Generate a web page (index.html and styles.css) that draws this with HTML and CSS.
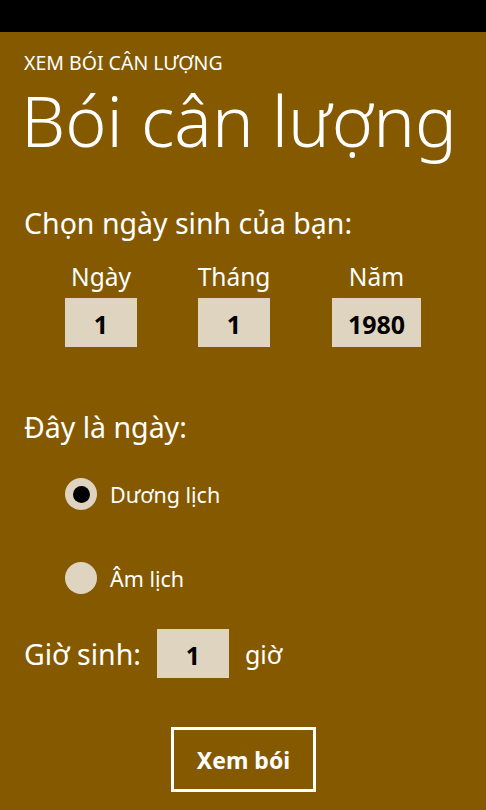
FILE: index.html
```html
<!DOCTYPE html>
<html lang="vi">
<head>
<meta charset="utf-8">
<link rel="stylesheet" href="styles.css">
</head>
<body>
<div class="statusbar"></div>
<main class="page">
  <div class="app-title">XEM BÓI CÂN LƯỢNG</div>
  <h1 class="page-title">Bói cân lượng</h1>
  <div class="section-label">Chọn ngày sinh của bạn:</div>
  <div class="date-row">
    <div class="date-col col-day">
      <div class="field-label">Ngày</div>
      <div class="field-box box-sm">1</div>
    </div>
    <div class="date-col col-month">
      <div class="field-label">Tháng</div>
      <div class="field-box box-sm">1</div>
    </div>
    <div class="date-col col-year">
      <div class="field-label">Năm</div>
      <div class="field-box box-lg">1980</div>
    </div>
  </div>
  <div class="section-label label-type">Đây là ngày:</div>
  <div class="radio-list">
    <div class="radio-item">
      <span class="radio checked"><span class="dot"></span></span>
      <span class="radio-text">Dương lịch</span>
    </div>
    <div class="radio-item">
      <span class="radio"></span>
      <span class="radio-text">Âm lịch</span>
    </div>
  </div>
  <div class="hour-row">
    <span class="section-label hour-label">Giờ sinh:</span>
    <div class="field-box box-sm">1</div>
    <span class="hour-unit">giờ</span>
  </div>
  <div class="btn-row">
    <div class="btn">Xem bói</div>
  </div>
</main>
</body>
</html>
```
FILE: styles.css
```css
html, body {
  margin: 0;
  padding: 0;
}
body {
  width: 486px;
  height: 810px;
  background: #855900;
  color: #ffffff;
  font-family: "Noto Sans", "Open Sans", sans-serif;
  overflow: hidden;
}
.statusbar {
  height: 32px;
  background: #000000;
}
.page {
  padding: 0 0 0 24px;
}
.app-title {
  font-size: 19.5px;
  line-height: 22px;
  margin-top: 20px;
}
.page-title {
  font-weight: 300;
  font-size: 70px;
  line-height: 80px;
  margin: 6px 0 0 -3px;
}
.section-label {
  font-size: 28.5px;
  line-height: 36px;
}
.page-title + .section-label {
  margin-top: 45px;
}
.date-row {
  display: flex;
  margin-top: 21px;
  margin-left: 41px;
}
.date-col {
  display: flex;
  flex-direction: column;
  align-items: center;
}
.col-day { width: 72px; }
.col-month { width: 72px; margin-left: 61px; }
.col-year { width: 89px; margin-left: 62px; }
.field-label {
  font-size: 24.5px;
  line-height: 30px;
  white-space: nowrap;
}
.field-box {
  height: 49px;
  box-sizing: border-box;
  padding-top: 3px;
  background: #dfd4c0;
  color: #000000;
  font-weight: 700;
  font-size: 25px;
  display: flex;
  align-items: center;
  justify-content: center;
  margin-top: 6px;
}
.box-sm { width: 72px; }
.box-lg { width: 89px; }
.label-type {
  margin-top: 62px;
}
.radio-list {
  margin-left: 41px;
  margin-top: 33px;
  display: flex;
  flex-direction: column;
  gap: 52px;
}
.radio-item {
  display: flex;
  align-items: center;
  height: 32px;
}
.radio {
  width: 32px;
  height: 32px;
  border-radius: 50%;
  background: #dfd4c0;
  display: flex;
  align-items: center;
  justify-content: center;
}
.dot {
  width: 17px;
  height: 17px;
  border-radius: 50%;
  background: #000000;
}
.radio-text {
  font-size: 21.5px;
  margin-left: 13px;
}
.hour-row {
  display: flex;
  align-items: center;
  margin-top: 35px;
}
.hour-row .field-box {
  margin-top: 0;
  margin-left: 16px;
}
.hour-unit {
  font-size: 25px;
  margin-left: 16px;
}
.btn-row {
  display: flex;
  margin-top: 49px;
  margin-left: 147px;
}
.btn {
  width: 139px;
  height: 59px;
  border: 3px solid #ffffff;
  display: flex;
  align-items: center;
  justify-content: center;
  font-weight: 700;
  font-size: 23px;
}
```
